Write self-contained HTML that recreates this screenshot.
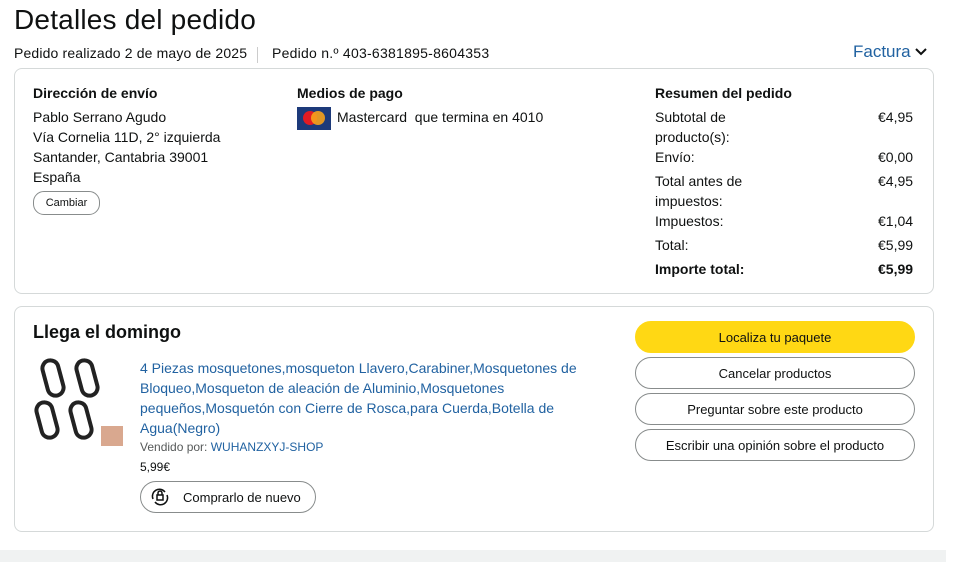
<!DOCTYPE html><html><head><meta charset="utf-8"><style>
body{margin:0;width:958px;height:562px;background:#fff;font-family:"Liberation Sans",Arial,sans-serif;color:#0f1111;position:relative;overflow:hidden;font-size:14px}
.a{position:absolute;white-space:nowrap}
.card{position:absolute;left:14px;width:918px;border:1px solid #d5d9d9;border-radius:8px}
.b{font-weight:bold}
.btn{position:absolute;left:635px;width:278px;height:30px;border:1px solid #888c8c;border-radius:16px;text-align:center;line-height:31px;font-size:13px;background:#fff}
.lnk{color:#2162a1}
</style></head><body>
<div class="a" style="left:14px;top:4px;font-size:28px;letter-spacing:.2px">Detalles del pedido</div>
<div class="a" style="left:14px;top:45px;letter-spacing:.15px">Pedido realizado 2 de mayo de 2025</div>
<div class="a" style="left:257px;top:47px;width:1px;height:16px;background:#ccc"></div>
<div class="a" style="left:272px;top:45px;letter-spacing:.25px">Pedido n.º 403-6381895-8604353</div>
<div class="a lnk" style="left:853px;top:42px;font-size:17px">Factura <svg width="12" height="10" viewBox="0 0 12 10"><path d="M1 2l5 5 5-5" stroke="#0f1111" stroke-width="2" fill="none"/></svg></div>
<div class="card" style="top:68px;height:224px"></div>
<div class="a b" style="left:33px;top:85px">Dirección de envío</div>
<div class="a" style="left:33px;top:107px;line-height:20px">Pablo Serrano Agudo<br>Vía Cornelia 11D, 2° izquierda<br>Santander, Cantabria 39001<br>España</div>
<div class="a" style="left:33px;top:191px;width:65px;height:22px;border:1px solid #888c8c;border-radius:11px;font-size:11px;text-align:center;line-height:23px">Cambiar</div>
<div class="a b" style="left:297px;top:85px">Medios de pago</div>
<div class="a" style="left:297px;top:107px;width:34px;height:23px;background:#1d3a7a"><div class="a" style="left:6px;top:4px;width:14px;height:14px;border-radius:50%;background:#e21b23"></div><div class="a" style="left:14px;top:4px;width:14px;height:14px;border-radius:50%;background:#f7a21b;opacity:.9"></div></div>
<div class="a" style="left:337px;top:109px">Mastercard &nbsp;que termina en 4010</div>
<div class="a b" style="left:655px;top:85px">Resumen del pedido</div>
<div class="a" style="left:655px;top:107px;line-height:20px">Subtotal de<br>producto(s):</div><div class="a" style="left:878px;top:109px">€4,95</div>
<div class="a" style="left:655px;top:149px">Envío:</div><div class="a" style="left:878px;top:149px">€0,00</div>
<div class="a" style="left:655px;top:171px;line-height:20px">Total antes de<br>impuestos:</div><div class="a" style="left:878px;top:173px">€4,95</div>
<div class="a" style="left:655px;top:213px">Impuestos:</div><div class="a" style="left:878px;top:213px">€1,04</div>
<div class="a" style="left:655px;top:237px">Total:</div><div class="a" style="left:878px;top:237px">€5,99</div>
<div class="a b" style="left:655px;top:261px">Importe total:</div><div class="a b" style="left:878px;top:261px">€5,99</div>
<div class="card" style="top:306px;height:224px"></div>
<div class="a b" style="left:33px;top:322px;font-size:18px">Llega el domingo</div>
<svg class="a" style="left:33px;top:356px" width="92" height="92" viewBox="0 0 92 92" fill="none" stroke="#222" stroke-width="4">
<rect x="12" y="4" width="16" height="36" rx="8" transform="rotate(-15 20 22)"/><rect x="46" y="4" width="16" height="36" rx="8" transform="rotate(-15 54 22)"/><rect x="6" y="46" width="16" height="36" rx="8" transform="rotate(-15 14 64)"/><rect x="40" y="46" width="16" height="36" rx="8" transform="rotate(-15 48 64)"/>
<rect x="68" y="70" width="22" height="20" fill="#d9a88f" stroke="none"/></svg>
<div class="a lnk" style="left:140px;top:358px;line-height:20px">4 Piezas mosquetones,mosqueton Llavero,Carabiner,Mosquetones de<br>Bloqueo,Mosqueton de aleación de Aluminio,Mosquetones<br>pequeños,Mosquetón con Cierre de Rosca,para Cuerda,Botella de<br>Agua(Negro)</div>
<div class="a" style="left:140px;top:440px;font-size:12px;color:#565959">Vendido por: <span class="lnk">WUHANZXYJ-SHOP</span></div>
<div class="a" style="left:140px;top:460px;font-size:12px">5,99€</div>
<div class="a" style="left:140px;top:481px;width:174px;height:30px;border:1px solid #888c8c;border-radius:16px;font-size:13px;line-height:31px"><svg class="a" style="left:8px;top:5px" width="22" height="20" viewBox="0 0 22 20" fill="none" stroke="#0f1111" stroke-width="1.5"><path d="M4 12a7 7 0 0 1 12-7M18 8a7 7 0 0 1-12 7"/><rect x="8" y="8" width="6" height="5"/><path d="M9 8V6a2 2 0 0 1 4 0v2"/></svg><span style="margin-left:42px">Comprarlo de nuevo</span></div>
<div class="btn" style="top:321px;background:#ffd814;border-color:#ffd814">Localiza tu paquete</div>
<div class="btn" style="top:357px">Cancelar productos</div>
<div class="btn" style="top:393px">Preguntar sobre este producto</div>
<div class="btn" style="top:429px">Escribir una opinión sobre el producto</div>
<div class="a" style="left:0;top:550px;width:946px;height:12px;background:#f0f2f2"></div>
</body></html>
